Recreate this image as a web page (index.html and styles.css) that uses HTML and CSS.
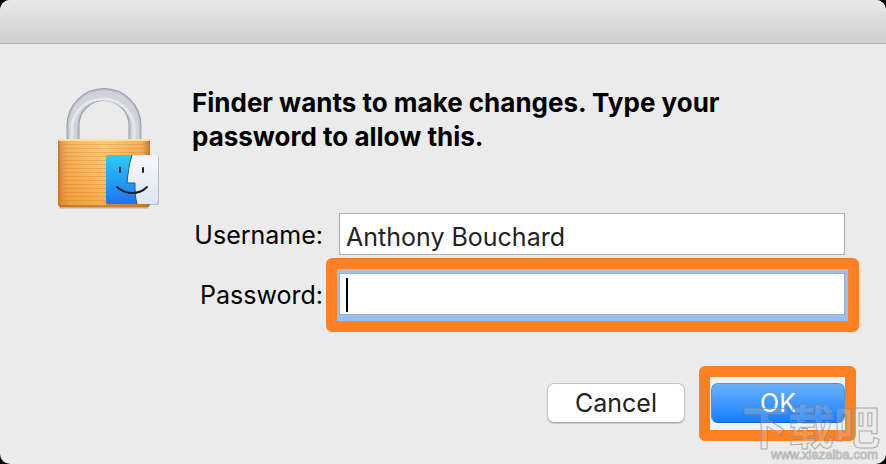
FILE: index.html
```html
<!DOCTYPE html>
<html lang="en">
<head>
    <meta charset="UTF-8">
    <meta name="viewport" content="width=device-width, initial-scale=1.0">
    <title>Finder</title>
    <link rel="stylesheet" href="styles.css">
</head>
<body>
    <div class="dialog" role="dialog" aria-labelledby="message">
        <div class="titlebar"></div>
        <div class="content">
            <svg class="lock" width="108" height="128" viewBox="0 -2 108 128" aria-hidden="true">
                <defs>
                    <linearGradient id="body" x1="0" x2="1" y1="0" y2="0">
                        <stop offset="0" stop-color="#b9681c"/>
                        <stop offset="0.04" stop-color="#e3953b"/>
                        <stop offset="0.12" stop-color="#f4ad52"/>
                        <stop offset="0.5" stop-color="#ffc672"/>
                        <stop offset="0.92" stop-color="#f1a64b"/>
                        <stop offset="1" stop-color="#b9681c"/>
                    </linearGradient>
                    <linearGradient id="shade" x1="0" x2="0" y1="0" y2="1">
                        <stop offset="0" stop-color="#fff" stop-opacity="0.1"/>
                        <stop offset="0.5" stop-color="#f09020" stop-opacity="0.1"/>
                        <stop offset="1" stop-color="#e57c10" stop-opacity="0.35"/>
                    </linearGradient>
                    <linearGradient id="blue" x1="0" x2="0" y1="0" y2="1">
                        <stop offset="0" stop-color="#2bcdf8"/>
                        <stop offset="1" stop-color="#2072ee"/>
                    </linearGradient>
                    <linearGradient id="white" x1="0" x2="0" y1="0" y2="1">
                        <stop offset="0" stop-color="#f7f7fa"/>
                        <stop offset="1" stop-color="#dae7f3"/>
                    </linearGradient>
                    <pattern id="lines" width="4" height="4" patternUnits="userSpaceOnUse">
                        <rect width="4" height="1" fill="#d88222" opacity="0.4"/>
                    </pattern>
                    <clipPath id="face"><rect x="49" y="67" width="52" height="49" rx="2"/></clipPath>
                </defs>
                <g fill="none">
                    <path d="M16 52V37.500a31 31 0 0 1 62 0V52" stroke="#989da5" stroke-width="13"/>
                    <path d="M16 52V37.500a31 31 0 0 1 62 0V52" stroke="#bec3ca" stroke-width="11"/>
                    <path d="M16 52V37.500a31 31 0 0 1 62 0V52" stroke="#d0d4da" stroke-width="8"/>
                    <path d="M15 52V37a31.500 31.500 0 0 1 62 0v15" stroke="#e4e7eb" stroke-width="3"/>
                </g>
                <path d="M4 119h86" fill="none" stroke="#777" stroke-width="3" stroke-linecap="round" opacity="0.5"/>
                <rect x="1" y="51" width="92" height="68" rx="3" fill="url(#body)"/>
                <rect x="1" y="53" width="92" height="62" fill="url(#lines)"/>
                <rect x="1" y="51" width="92" height="68" rx="3" fill="url(#shade)"/>
                <path d="M2 52h90" stroke="#ffe2a1" stroke-width="2"/>
                <path d="M3 118h88" stroke="#a45b17" stroke-width="1"/>
                <rect x="49" y="68" width="53" height="49" rx="2" fill="#555" opacity="0.3"/>
                <g clip-path="url(#face)">
                    <rect x="49" y="67" width="52" height="49" fill="url(#blue)"/>
                    <path d="M75 67c-3 9-4 18-5 28h8c0 8 0 14 2 21h21V67z" fill="url(#white)"/>
                    <path d="M75 67c-3 9-4 18-5 28h8c0 8 0 14 2 21" fill="none" stroke="#1c5a91" stroke-width="1"/>
                </g>
                <path d="M63 80v4M86 80v4" stroke="#17202a" stroke-width="2" stroke-linecap="round"/>
                <path d="M60 99c9 8 22 8 30 0" fill="none" stroke="#17202a" stroke-width="2" stroke-linecap="round"/>
            </svg>

            <form class="form">
                <h1 id="message">Finder wants to make changes. Type your password to allow this.</h1>
                <div class="fields">
                    <label for="username">Username:</label>
                    <input id="username" type="text" value="Anthony Bouchard">
                    <label for="password">Password:</label>
                    <div class="marked marked-field">
                        <input id="password" class="focused" type="password">
                        <span class="caret"></span>
                    </div>
                </div>
                <div class="buttons">
                    <button type="button" class="btn">Cancel</button>
                    <div class="marked marked-button">
                        <button type="submit" class="btn btn-primary">OK</button>
                    </div>
                </div>
            </form>
        </div>
        <div class="watermark">
            <div class="watermark-name" lang="zh">下载吧</div>
            <div class="watermark-url">www.xiazaiba.com</div>
        </div>
    </div>
</body>
</html>
```
FILE: styles.css
```css
* {
    box-sizing: border-box;
    margin: 0;
    padding: 0;
}
body {
    background: #000;
    color: #000;
    font-family: Inter, "Liberation Sans", sans-serif;
    font-size: 25px;
}
.dialog {
    position: relative;
    min-height: 100vh;
    background: #ebebeb;
    border-radius: 10px;
    overflow: hidden;
}
.titlebar {
    height: 44px;
    background: linear-gradient(#e9e9e9, #cecece);
    border-bottom: 1px solid #aeaeae;
}
.content {
    display: flex;
    gap: 27px;
    padding: 42px 41px 40px 57px;
}
.lock {
    flex: none;
}
.form {
    flex: 1;
}
h1 {
    font-size: 26px;
    line-height: 34px;
    font-weight: 700;
    max-width: 560px;
}
.fields {
    display: grid;
    grid-template-columns: 131px 1fr;
    column-gap: 16px;
    row-gap: 18px;
    align-items: center;
    margin-top: 59px;
}
label {
    padding-top: 2px;
    text-align: right;
}
input {
    display: block;
    width: 100%;
    height: 42px;
    padding: 6px 6px 0;
    border: 1px solid #b0b0b0;
    border-radius: 0;
    background: #fff;
    color: #222;
    font: inherit;
    outline: none;
}
.focused {
    border-color: #9bb0c8;
    box-shadow: 0 1px 0 5px #98c0ec;
}
/* orange highlight around a control */
.marked {
    position: relative;
}
.marked::after {
    content: "";
    position: absolute;
    border: 11px solid #ff8020;
    border-radius: 6px;
    pointer-events: none;
}
.marked-field::after {
    inset: -15px -14px -17px -13px;
}
.marked-button::after {
    inset: -17px -11px -18px -12px;
}
.caret {
    position: absolute;
    left: 7px;
    top: 5px;
    width: 2px;
    height: 34px;
    background: #000;
}
.buttons {
    display: flex;
    justify-content: flex-end;
    gap: 26px;
    margin-top: 68px;
}
.btn {
    display: block;
    width: 138px;
    height: 40px;
    border: 1px solid #c2c2c2;
    border-bottom-color: #a8a8a8;
    border-radius: 7px;
    background: #fff;
    box-shadow: 0 1px 1px rgba(0,0,0,0.15);
    color: #222;
    font: inherit;
}
.btn-primary {
    width: 134px;
    border-color: #4a94dc;
    border-bottom-color: #1a62d8;
    background: linear-gradient(#6bb3fa, #147dff);
    box-shadow: 0 0 0 12px #f3f3f3;
    color: #fff;
}
.watermark {
    position: absolute;
    right: 6px;
    bottom: 2px;
    text-align: right;
    color: rgba(235,235,235,0.2);
    -webkit-text-stroke: 1px rgba(140,140,140,0.7);
    pointer-events: none;
}
.watermark-name {
    font-family: "Noto Sans CJK SC", sans-serif;
    font-size: 46px;
    line-height: 48px;
    font-weight: 700;
}
.watermark-url {
    padding-right: 2px;
    font-family: "Liberation Sans", sans-serif;
    font-size: 13px;
    line-height: 14px;
    color: rgba(245,245,245,0.8);
    -webkit-text-stroke: 1px rgba(140,140,140,0.5);
}
```
